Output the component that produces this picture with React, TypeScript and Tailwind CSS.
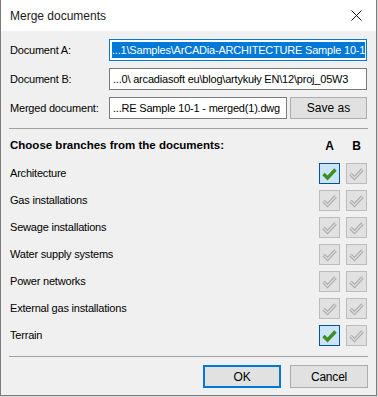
import React from "react";

const font = { fontFamily: '"Liberation Sans", Arial, sans-serif' };

function Check({ on }: { on: boolean }) {
  if (on) {
    return (
      <div className="w-[21px] h-[21px] border border-[#005499] bg-[#cce4f7] flex items-center justify-center">
        <svg width="19" height="19" viewBox="0 0 19 19">
          <path d="M3.5 10 L7.5 14 L15.5 5.5" fill="none" stroke="#3f8f1f" strokeWidth="3.4" strokeLinejoin="miter" />
        </svg>
      </div>
    );
  }
  return (
    <div className="w-[21px] h-[21px] border border-[#bcbcbc] bg-[#e1e1e1] flex items-center justify-center">
      <svg width="19" height="19" viewBox="0 0 19 19">
        <path d="M3.5 10 L7.5 14 L15.5 5.5" fill="none" stroke="#a9a9a9" strokeWidth="3.4" />
        <path d="M3.5 10 L7.5 14 L15.5 5.5" fill="none" stroke="#dcdcdc" strokeWidth="1.3" />
      </svg>
    </div>
  );
}

const rows: [string, boolean][] = [
  ["Architecture", true],
  ["Gas installations", false],
  ["Sewage installations", false],
  ["Water supply systems", false],
  ["Power networks", false],
  ["External gas installations", false],
  ["Terrain", true],
];

export default function App() {
  return (
    <div className="w-[378px] h-[397px] bg-[#d8d8d8]" style={font}>
      <div className="w-[377px] h-[396px] border-x border-b border-[#7c7c7c] flex flex-col bg-[#f0f0f0] text-[11px] tracking-[-0.2px] text-black">
        <div className="h-[31px] shrink-0 bg-white flex items-center justify-between pl-[9px] pr-[14px]">
          <span className="text-[12px] tracking-normal text-[#1a1a1a]">Merge documents</span>
          <svg width="11" height="11" viewBox="0 0 11 11">
            <path d="M0.5 0.5 L10.5 10.5 M10.5 0.5 L0.5 10.5" stroke="#111" strokeWidth="1" />
          </svg>
        </div>
        <div className="flex flex-col px-[8px] pt-[8px]">
          <div className="flex flex-col gap-[7px]">
            <div className="flex items-center">
              <span className="w-[100px] pl-[1px] whitespace-nowrap">Document A:</span>
              <div className="w-[258px] h-[22px] border border-[#0078d7] bg-white flex items-center px-[2px] overflow-hidden whitespace-nowrap">
                <span className="bg-[#0078d7] text-white leading-[16px]">...1\Samples\ArCADia-ARCHITECTURE Sample 10-1</span>
                <span className="w-[1px] h-[16px] bg-black" />
              </div>
            </div>
            <div className="flex items-center">
              <span className="w-[100px] pl-[1px] whitespace-nowrap">Document B:</span>
              <div className="w-[258px] h-[22px] border border-[#7a7a7a] bg-white flex items-center px-[3px] overflow-hidden whitespace-nowrap">
                ...0\ arcadiasoft eu\blog\artykuły EN\12\proj_05W3
              </div>
            </div>
            <div className="flex items-center">
              <span className="w-[100px] pl-[1px] whitespace-nowrap">Merged document:</span>
              <div className="w-[178px] h-[22px] border border-[#7a7a7a] bg-white flex items-center px-[3px] overflow-hidden whitespace-nowrap">
                ...RE Sample 10-1 - merged(1).dwg
              </div>
              <button className="ml-[3px] w-[77px] h-[22px] border border-[#adadad] bg-[#e1e1e1] flex items-center justify-center text-[12px] tracking-normal">
                Save as
              </button>
            </div>
          </div>
          <div className="mt-[9px] h-[1px] bg-[#a0a0a0]" />
          <div className="flex items-center justify-between mt-[10px] h-[14px]">
            <span className="font-bold text-[11.5px] tracking-normal pl-[1px]">Choose branches from the documents:</span>
            <div className="flex gap-[6px] pr-[1px] font-bold text-[12px]">
              <span className="w-[21px] text-center">A</span>
              <span className="w-[21px] text-center">B</span>
            </div>
          </div>
          <div className="flex flex-col gap-[6px] mt-[10px]">
            {rows.map(([name, on]) => (
              <div key={name} className="flex items-center justify-between h-[21px]">
                <span className="pl-[1px]">{name}</span>
                <div className="flex gap-[6px] pr-[1px]">
                  <Check on={on} />
                  <Check on={false} />
                </div>
              </div>
            ))}
          </div>
          <div className="mt-[10px] h-[1px] bg-[#a0a0a0]" />
          <div className="flex justify-end gap-[9px] mt-[8px]">
            <button className="w-[78px] h-[23px] border-2 border-[#0078d7] bg-[#e1e1e1] flex items-center justify-center text-[12px]">
              OK
            </button>
            <button className="w-[78px] h-[23px] border border-[#adadad] bg-[#e1e1e1] flex items-center justify-center text-[12px]">
              Cancel
            </button>
          </div>
        </div>
      </div>
    </div>
  );
}
